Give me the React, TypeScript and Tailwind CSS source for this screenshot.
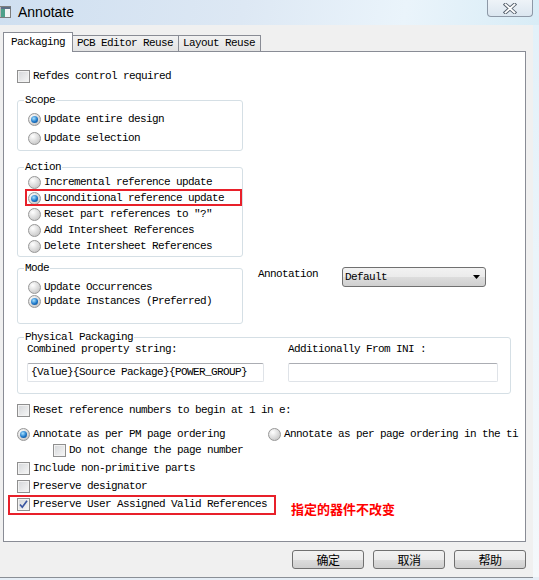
import React from "react"

const mono = "font-['Liberation_Mono',monospace] text-[11px] tracking-[-0.6px] text-black"

function Checkbox({ checked = false }: { checked?: boolean }) {
  return (
    <span className="relative w-[13px] h-[13px] shrink-0 border border-[#8f8f8f] bg-gradient-to-br from-[#d4d6d9] to-[#f7f7f7] shadow-[inset_0_0_0_1px_#f2f2f2]">
      {checked && (
        <svg viewBox="0 0 11 11" className="absolute inset-0 w-[11px] h-[11px]">
          <path d="M2 5.5 L4.3 8.2 L9 1.8" fill="none" stroke="#3a55a0" strokeWidth="1.7" />
        </svg>
      )}
    </span>
  )
}

function Radio({ checked = false }: { checked?: boolean }) {
  return (
    <span className="relative w-[13px] h-[13px] shrink-0 rounded-full border border-[#979797] bg-[radial-gradient(circle_at_35%_30%,#ffffff,#cfcfcf_70%,#b9b9b9)] flex items-center justify-center">
      {checked && (
        <span className="w-[7px] h-[7px] rounded-full bg-[radial-gradient(circle_at_40%_35%,#a8e2ff,#1d78c9_55%,#0b3c78)]" />
      )}
    </span>
  )
}

function Row({ children, className = "", h = "h-[16px]" }: { children: React.ReactNode; className?: string; h?: string }) {
  return <div className={"flex items-center gap-[3px] " + h + " " + className}>{children}</div>
}

function Group({ title, className = "", legendClass = "", children }: { title: string; className?: string; legendClass?: string; children: React.ReactNode }) {
  return (
    <fieldset className={"border border-[#d5dfe5] rounded-[3px] " + className}>
      <legend className={"px-[1px] leading-[14px] " + legendClass}>{title}</legend>
      {children}
    </fieldset>
  )
}

function WinButton({ label }: { label: string }) {
  return (
    <div className="w-[72px] h-[19px] rounded-[3px] border border-[#707070] bg-[linear-gradient(#f2f2f2_0%,#ebebeb_50%,#dddddd_50%,#cfcfcf_100%)] flex items-center justify-center font-['Noto_Sans_CJK_SC',sans-serif] text-[12px] text-black">
      {label}
    </div>
  )
}

export default function App() {
  return (
    <div className="w-[539px] h-[580px] relative overflow-hidden bg-[#e6eef6] flex flex-col">
      {/* Title bar */}
      <div className="h-[25px] shrink-0 flex items-center bg-[linear-gradient(100deg,#cfdff0_0%,#dde8f4_45%,#eaf4fb_75%,#d8ecf6_100%)]">
        <svg width="11" height="12" viewBox="0 0 11 12" className="mt-[-1px]">
          <rect x="0" y="0.5" width="10.5" height="11" fill="#f4f4f4" stroke="#7d7d7d" />
          <rect x="1" y="1" width="9.5" height="2" fill="#5c6f86" />
          <rect x="1" y="3" width="4" height="8" fill="#4fa08a" />
        </svg>
        <span className="ml-[7px] font-['Liberation_Sans',sans-serif] text-[14px] text-black">Annotate</span>
      </div>
      <div className="absolute right-[6px] top-0 w-[46px] h-[17px] rounded-b-[4px] border border-t-0 border-[#8d98a6] bg-[linear-gradient(#eef3f8,#dbe6f0)] flex items-center justify-center">
        <svg width="14" height="11" viewBox="0 0 14 11">
          <path d="M2.5 1.5 L11.5 9.5 M11.5 1.5 L2.5 9.5" stroke="#56606c" strokeWidth="3.6" strokeLinecap="square" />
          <path d="M2.5 1.5 L11.5 9.5 M11.5 1.5 L2.5 9.5" stroke="#ffffff" strokeWidth="1.8" strokeLinecap="square" />
        </svg>
      </div>

      <div className="flex flex-1">
        {/* Window body */}
        <div className={"w-[533px] h-[552px] bg-[#f0f0f0] flex flex-col " + mono}>
          {/* Tabs */}
          <div className="flex items-end ml-[3px] mt-[7px] -mb-px relative z-10">
            <div className="w-[70px] h-[20px] bg-white border border-b-0 border-[#898c95] pl-[7px] flex items-center">Packaging</div>
            <div className="w-[106px] h-[16px] mb-px border border-l-0 border-b-0 border-[#898c95] bg-[linear-gradient(#f2f2f2,#e3e3e3)] pl-[4px] flex items-center">PCB Editor Reuse</div>
            <div className="w-[82px] h-[16px] mb-px border border-l-0 border-b-0 border-[#898c95] bg-[linear-gradient(#f2f2f2,#e3e3e3)] pl-[4px] flex items-center">Layout Reuse</div>
          </div>

          {/* Panel */}
          <div className="ml-[3px] w-[523px] h-[491px] bg-white border border-[#898c95] pl-[13px] flex flex-col overflow-hidden">
            <Row className="mt-[16px]">
              <Checkbox />
              <span>Refdes control required</span>
            </Row>

            <Group title="Scope" className="w-[226px] mt-[9px] pl-[10px] pb-[4px]" legendClass="ml-[-4px]">
              <Row className="mt-[4px]">
                <Radio checked />
                <span>Update entire design</span>
              </Row>
              <Row className="mt-[3px]">
                <Radio />
                <span>Update selection</span>
              </Row>
            </Group>

            <Group title="Action" className="w-[226px] mt-[9px] pl-[10px] pb-[2px]" legendClass="ml-[-4px]">
              <Row>
                <Radio />
                <span>Incremental reference update</span>
              </Row>
              <Row className="relative">
                <Radio checked />
                <span>Unconditional reference update</span>
                <div className="absolute left-[-3px] top-[-1px] w-[217px] h-[17px] border-2 border-[#e8202a]" />
              </Row>
              <Row>
                <Radio />
                <span>Reset part references to "?"</span>
              </Row>
              <Row>
                <Radio />
                <span>Add Intersheet References</span>
              </Row>
              <Row>
                <Radio />
                <span>Delete Intersheet References</span>
              </Row>
            </Group>

            <div className="flex items-start mt-[4px]">
              <Group title="Mode" className="w-[226px] pl-[10px] pb-[15px]" legendClass="ml-[-4px]">
                <Row className="mt-[5px]" h="h-[14px]">
                  <Radio />
                  <span>Update Occurrences</span>
                </Row>
                <Row h="h-[14px]">
                  <Radio checked />
                  <span>Update Instances (Preferred)</span>
                </Row>
              </Group>
              <span className="ml-[15px] mt-[6px] leading-[14px]">Annotation</span>
              <div className="ml-[24px] mt-[6px] w-[144px] h-[20px] rounded-[3px] border border-[#707070] bg-[linear-gradient(#f2f2f2_0%,#ebebeb_50%,#dddddd_50%,#cfcfcf_100%)] flex items-center justify-between pl-[2px] pr-[5px]">
                <span>Default</span>
                <svg width="7" height="4" viewBox="0 0 7 4">
                  <path d="M0 0 H7 L3.5 4 Z" fill="#000" />
                </svg>
              </div>
            </div>

            <Group title="Physical Packaging" className="w-[494px] mt-[6px] pl-[9px] pb-[11px]" legendClass="ml-[-3px]">
              <div className="flex -mt-[2px] h-[14px] leading-[14px]">
                <span className="w-[261px]">Combined property string:</span>
                <span>Additionally From INI :</span>
              </div>
              <div className="flex mt-[7px] gap-[24px]">
                <div className="w-[237px] h-[19px] rounded-[2px] border border-[#dfe3e8] border-t-[#abadb3] flex items-center pl-[3px]">
                  {"{Value}{Source Package}{POWER_GROUP}"}
                </div>
                <div className="w-[210px] h-[19px] rounded-[2px] border border-[#dfe3e8] border-t-[#abadb3]" />
              </div>
            </Group>

            <Row className="mt-[8px]">
              <Checkbox />
              <span>Reset reference numbers to begin at 1 in e:</span>
            </Row>

            <div className="flex mt-[8px] h-[16px]">
              <Row className="w-[251px]">
                <Radio checked />
                <span>Annotate as per PM page ordering</span>
              </Row>
              <Row className="whitespace-nowrap">
                <Radio />
                <span>Annotate as per page ordering in the ti</span>
              </Row>
            </div>

            <Row className="ml-[36px]">
              <Checkbox />
              <span>Do not change the page number</span>
            </Row>
            <Row className="mt-[2px]">
              <Checkbox />
              <span>Include non-primitive parts</span>
            </Row>
            <Row className="mt-[2px]">
              <Checkbox />
              <span>Preserve designator</span>
            </Row>
            <div className="flex items-start mt-[2px]">
              <Row className="relative">
                <Checkbox checked />
                <span>Preserve User Assigned Valid References</span>
                <div className="absolute left-[-9px] top-[-1px] w-[268px] h-[20px] border-2 border-[#e8202a]" />
              </Row>
              <span className="ml-[24px] mt-[6px] font-['Noto_Sans_CJK_SC',sans-serif] text-[13px] font-bold tracking-normal text-[#ff0000] leading-[13px]">
                指定的器件不改变
              </span>
            </div>
          </div>

          {/* Buttons */}
          <div className="flex justify-end gap-[9px] pr-[7px] mt-[8px]">
            <WinButton label="确定" />
            <WinButton label="取消" />
            <WinButton label="帮助" />
          </div>
        </div>
        <div className="w-[6px] bg-[linear-gradient(#e3f1f9,#f4f8fb)]" />
      </div>
      <div className="h-px w-[533px] bg-[#8a8f96]" />
      <div className="h-[2px]" />
    </div>
  )
}
